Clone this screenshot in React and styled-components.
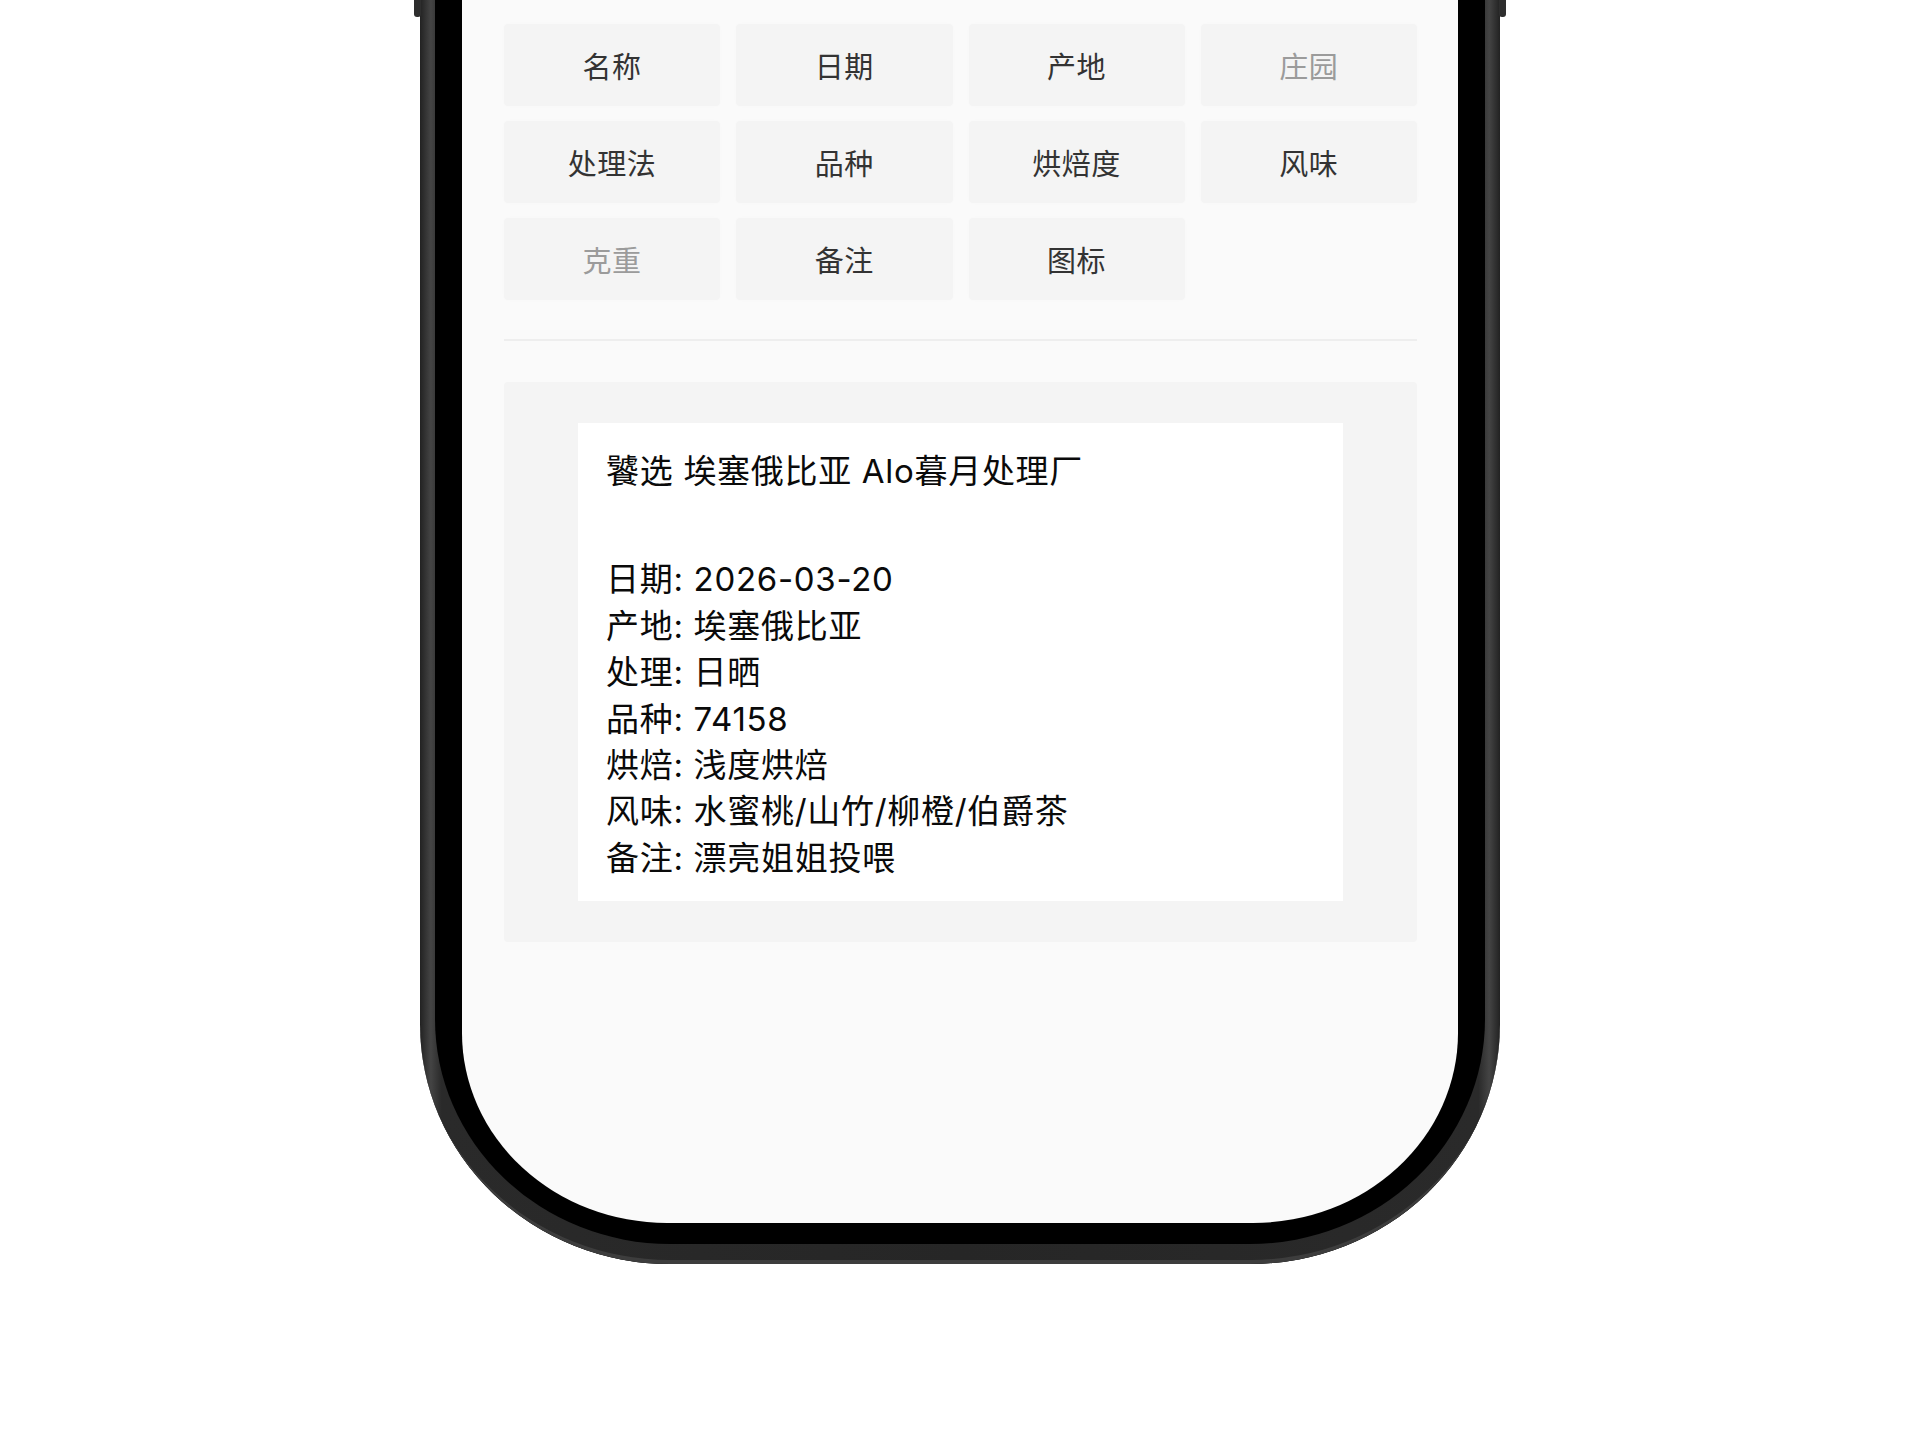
import React from 'react';
import styled, { createGlobalStyle } from 'styled-components';

const GlobalStyle = createGlobalStyle`
  html, body {
    margin: 0;
    padding: 0;
    background: #ffffff;
  }
  body {
    font-family: 'Inter', 'Noto Sans CJK SC', sans-serif;
  }
`;

const Stage = styled.div`
  display: flex;
  justify-content: center;
  height: 1440px;
  overflow: hidden;
`;

// metal band of the phone
const Frame = styled.div`
  position: relative;
  width: 1080px;
  height: 1264px;
  box-sizing: border-box;
  padding: 0 15px 20px 15px;
  background: linear-gradient(90deg, #222 0%, #444 1%, #2a2a2a 2%, #262626 50%, #2a2a2a 98%, #444 99%, #222 100%);
  border-radius: 0 0 250px 250px / 0 0 240px 240px;
  box-shadow: inset 0 -7px 0 -3px #3d3d3d, inset 0 -1px 0 #1a1a1a;

  &::before,
  &::after {
    content: '';
    position: absolute;
    top: 0;
    width: 7px;
    height: 17px;
    background: #2e2e2e;
    border-radius: 0 0 3px 3px;
  }
  &::before { left: -6px; }
  &::after { right: -6px; }
`;

const Bezel = styled.div`
  height: 100%;
  box-sizing: border-box;
  padding: 0 27px 21px 27px;
  background: #000;
  border-radius: 0 0 235px 235px / 0 0 225px 225px;
`;

const Screen = styled.div`
  height: 100%;
  box-sizing: border-box;
  padding: 24px 41px 0 42px;
  background: #fafafa;
  border-radius: 0 0 205px 205px / 0 0 190px 190px;
  overflow: hidden;
`;

const FieldGrid = styled.div`
  display: grid;
  grid-template-columns: repeat(4, 1fr);
  grid-auto-rows: 82px;
  column-gap: 16px;
  row-gap: 15px;
`;

const FieldButton = styled.div`
  display: flex;
  align-items: center;
  justify-content: center;
  background: #f4f4f4;
  border-radius: 4px;
  box-shadow: 0 0 4px rgba(0, 0, 0, 0.015);
  font-size: 29px;
  color: ${(p) => (p.$off ? '#9b9b9b' : '#333333')};
  letter-spacing: 0.5px;
`;

const Divider = styled.div`
  height: 2px;
  margin-top: 39px;
  background: #eeeeee;
`;

const PreviewArea = styled.div`
  margin-top: 41px;
  padding: 41px 0;
  background: #f4f4f4;
  border-radius: 4px;
  display: flex;
  justify-content: center;
`;

const LabelCard = styled.div`
  width: 765px;
  box-sizing: border-box;
  padding: 25px 20px 20px 28px;
  background: #ffffff;
  color: #0a0a0a;
  font-size: 33px;
  letter-spacing: 0.7px;
  line-height: 46.4px;
`;

const Title = styled.div`
  margin-bottom: 62px;
`;

const Line = styled.div`
  white-space: pre;
`;

const fields = [
  { name: '名称' },
  { name: '日期' },
  { name: '产地' },
  { name: '庄园', off: true },
  { name: '处理法' },
  { name: '品种' },
  { name: '烘焙度' },
  { name: '风味' },
  { name: '克重', off: true },
  { name: '备注' },
  { name: '图标' },
];

const lines = [
  ['日期', '2026-03-20'],
  ['产地', '埃塞俄比亚'],
  ['处理', '日晒'],
  ['品种', '74158'],
  ['烘焙', '浅度烘焙'],
  ['风味', '水蜜桃/山竹/柳橙/伯爵茶'],
  ['备注', '漂亮姐姐投喂'],
];

export default function App() {
  return (
    <>
      <GlobalStyle />
      <Stage>
        <Frame>
          <Bezel>
            <Screen>
              <FieldGrid>
                {fields.map((f) => (
                  <FieldButton key={f.name} $off={f.off}>
                    {f.name}
                  </FieldButton>
                ))}
              </FieldGrid>
              <Divider />
              <PreviewArea>
                <LabelCard>
                  <Title>饕选 埃塞俄比亚 Alo暮月处理厂</Title>
                  {lines.map(([k, v]) => (
                    <Line key={k}>{`${k}: ${v}`}</Line>
                  ))}
                </LabelCard>
              </PreviewArea>
            </Screen>
          </Bezel>
        </Frame>
      </Stage>
    </>
  );
}
